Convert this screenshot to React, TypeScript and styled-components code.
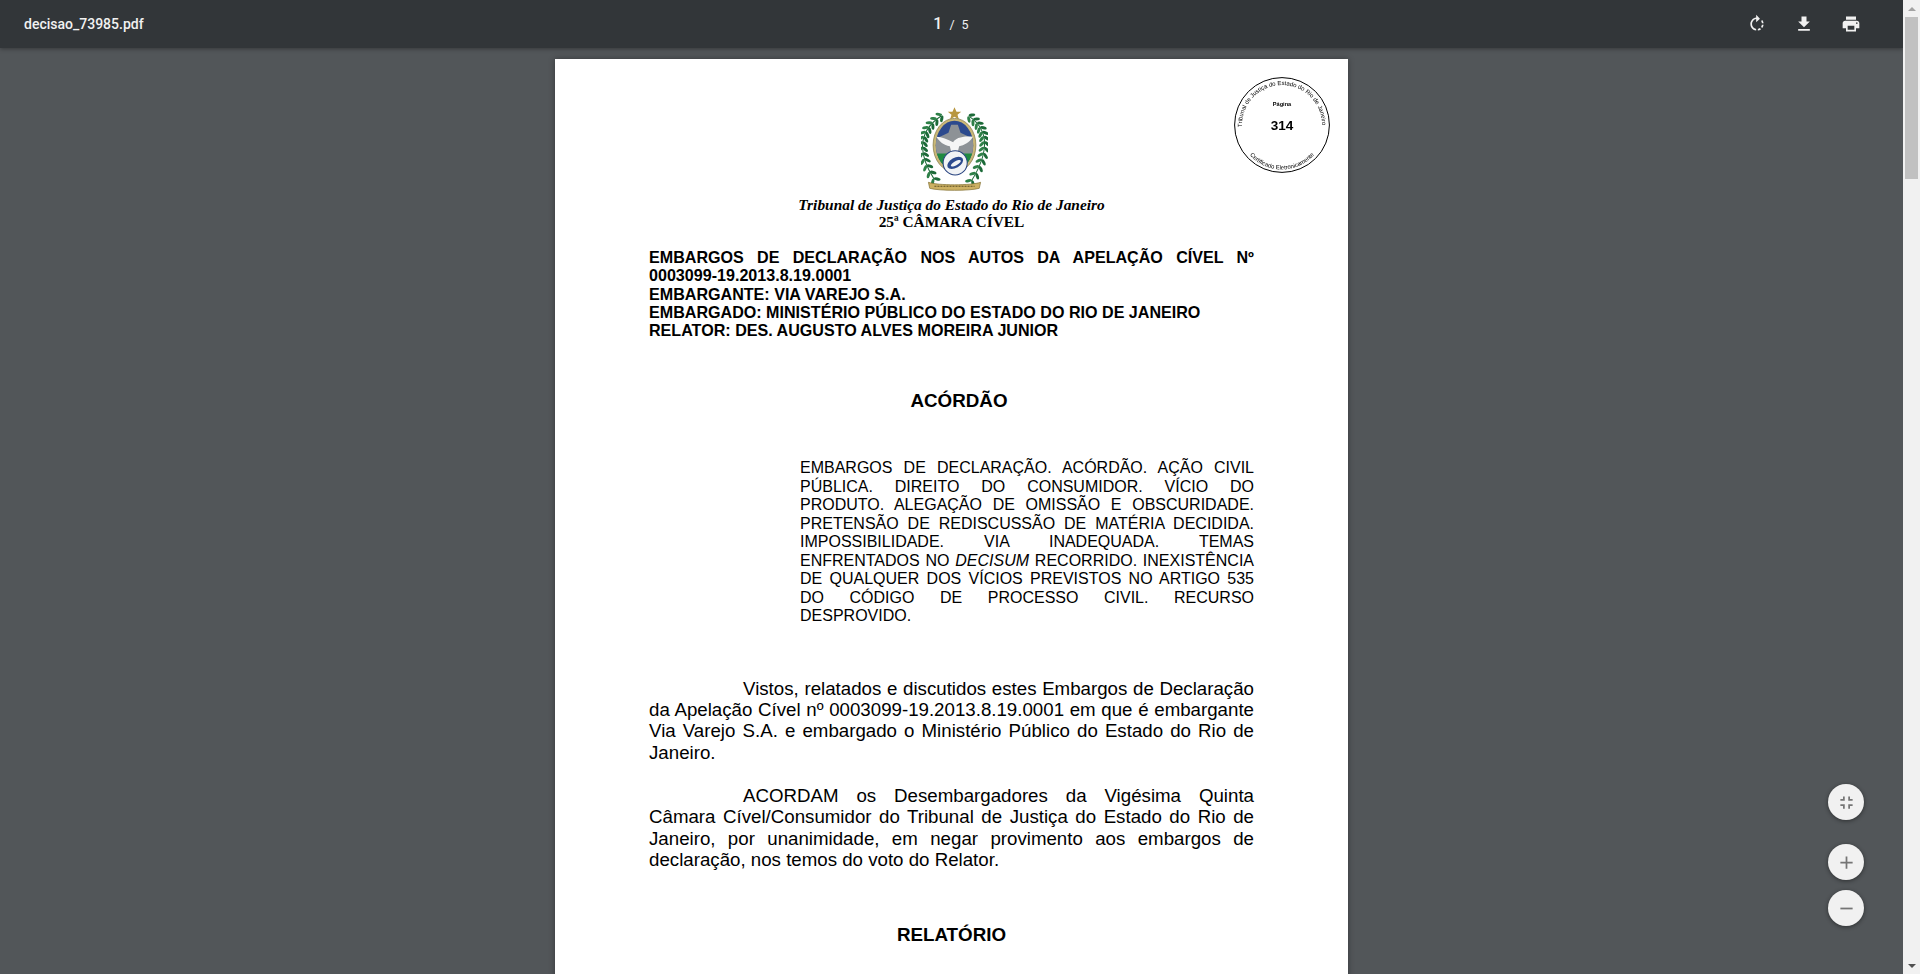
import React from "react";
import styled, { createGlobalStyle } from "styled-components";

const GlobalStyle = createGlobalStyle`
	html, body {
		margin: 0;
		height: 100%;
		overflow: hidden;
		background: #525659;
	}
`;

const Viewer = styled.div`
	width: 1920px;
	height: 974px;
	display: flex;
	overflow: hidden;
	background: #525659;
	font-family: "Liberation Sans", Arial, sans-serif;
`;

const Main = styled.div`
	flex: 1;
	min-width: 0;
	display: flex;
	flex-direction: column;
	position: relative;
`;

const Toolbar = styled.header`
	height: 48px;
	flex: none;
	display: grid;
	grid-template-columns: 1fr auto 1fr;
	align-items: center;
	padding: 0 24px;
	background: #323639;
	color: #f1f1f1;
	box-shadow: 0 1px 4px rgba(0, 0, 0, 0.35);
	z-index: 2;
`;

const FileName = styled.div`
	font-family: Roboto, sans-serif;
	font-size: 14px;
	font-weight: 500;
`;

const PageCount = styled.div`
	font-family: Roboto, sans-serif;
	font-size: 12.5px;
	display: flex;
	align-items: baseline;
	gap: 7px;
	margin: 0 1px 2px 0;
`;

const CurrentPage = styled.span`
	font-size: 16px;
	font-weight: 500;
`;

const Actions = styled.div`
	display: flex;
	justify-content: flex-end;
	gap: 27px;
	margin-right: 18px;
`;

const ToolIcon = styled.svg`
	width: 20px;
	height: 20px;
	fill: #f1f1f1;
	display: block;
`;

const Canvas = styled.div`
	flex: 1;
	display: flex;
	justify-content: center;
	padding-top: 11px;
	overflow: hidden;
`;

const Page = styled.article`
	width: 793px;
	height: 1122px;
	flex: none;
	box-sizing: border-box;
	padding: 0 94px;
	background: #fff;
	color: #000;
	box-shadow: 0 0 6px rgba(0, 0, 0, 0.35);
	position: relative;
`;

const Letterhead = styled.div`
	display: flex;
	flex-direction: column;
	align-items: center;
	padding-top: 47px;
`;

const EmblemArt = styled.svg`
	width: 67px;
	height: 87px;
	margin: 0 0 3px 6px;
	display: block;
	filter: blur(0.45px);
`;

const CourtName = styled.div<{ $italic?: boolean }>`
	font-family: "Liberation Serif", serif;
	font-weight: bold;
	font-style: ${({ $italic }) => ($italic ? "italic" : "normal")};
	font-size: 15.4px;
	line-height: 17px;
`;

const Stamp = styled.svg`
	position: absolute;
	top: 18px;
	right: 18px;
	width: 96px;
	height: 96px;
	font-family: "Liberation Sans", Arial, sans-serif;
	filter: blur(0.25px);
`;

const CaseHead = styled.div`
	margin-top: 18px;
	font-size: 16.1px;
	font-weight: bold;
	line-height: 18.3px;
`;

const CaseTitle = styled.div`
	text-align: justify;
`;

const CaseNumber = styled.span`
	white-space: nowrap;
`;

const Heading = styled.h2<{ $top: number; $indent?: number }>`
	margin: ${({ $top }) => $top}px 0 0;
	padding-left: ${({ $indent }) => $indent ?? 0}px;
	font-size: 18.8px;
	line-height: 22px;
	font-weight: bold;
	text-align: center;
`;

const Summary = styled.div`
	margin: 47px 0 0 151px;
	font-size: 16px;
	line-height: 18.45px;
	text-align: justify;
`;

const Body = styled.div`
	margin-top: 52px;
`;

const Paragraph = styled.p`
	margin: 0 0 21.5px;
	font-size: 18.7px;
	line-height: 21.4px;
	text-align: justify;
	text-indent: 94px;
`;

const FabGroup = styled.div`
	position: absolute;
	right: 39px;
	bottom: 48px;
	display: flex;
	flex-direction: column;
	gap: 10px;
`;

const Fab = styled.button<{ $gap?: boolean }>`
	width: 36px;
	height: 36px;
	padding: 0;
	border: 0;
	border-radius: 50%;
	display: flex;
	align-items: center;
	justify-content: center;
	background: #f1f1f1;
	box-shadow: 0 1px 4px rgba(0, 0, 0, 0.45);
	margin-bottom: ${({ $gap }) => ($gap ? "14px" : "0")};
`;

const FabIcon = styled.svg`
	width: 21px;
	height: 21px;
	fill: #757575;
`;

const Scrollbar = styled.div`
	width: 17px;
	flex: none;
	display: flex;
	flex-direction: column;
	align-items: center;
	background: #f1f1f1;
	z-index: 3;
`;

const ScrollArrow = styled.div<{ $down?: boolean }>`
	height: 17px;
	flex: none;
	display: flex;
	align-items: center;
	justify-content: center;
	&::after {
		content: "";
		border-left: 4px solid transparent;
		border-right: 4px solid transparent;
		${({ $down }) =>
			$down ? "border-top: 4px solid #505050;" : "border-bottom: 4px solid #a3a3a3;"}
	}
`;

const ScrollThumb = styled.div`
	width: 13px;
	height: 162px;
	background: #c1c1c1;
`;

const ScrollTrack = styled.div`
	flex: 1;
`;

// one laurel branch: leaves in pairs along a quadratic curve
function Branch({ from, ctrl, to }: { from: number[]; ctrl: number[]; to: number[] }) {
	const leaves = [];
	for (let i = 0; i < 13; i++) {
		const t = i / 12;
		const x = (1 - t) * (1 - t) * from[0] + 2 * t * (1 - t) * ctrl[0] + t * t * to[0];
		const y = (1 - t) * (1 - t) * from[1] + 2 * t * (1 - t) * ctrl[1] + t * t * to[1];
		const dx = 2 * (1 - t) * (ctrl[0] - from[0]) + 2 * t * (to[0] - ctrl[0]);
		const dy = 2 * (1 - t) * (ctrl[1] - from[1]) + 2 * t * (to[1] - ctrl[1]);
		const angle = (Math.atan2(dy, dx) * 180) / Math.PI;
		leaves.push(
			<g key={i} transform={`translate(${x} ${y}) rotate(${angle})`}>
				<ellipse cx="3" cy="-8" rx="10" ry="4.5" transform="rotate(-45 3 -8)" fill="#1c6a38" />
				<ellipse cx="3" cy="8" rx="10" ry="4.5" transform="rotate(45 3 8)" fill="#2e8048" />
			</g>
		);
	}
	return (
		<g>
			<path d={`M${from[0]} ${from[1]} Q${ctrl[0]} ${ctrl[1]} ${to[0]} ${to[1]}`} fill="none" stroke="#1c6a38" strokeWidth="3" />
			{leaves}
		</g>
	);
}

function Emblem() {
	return (
		<EmblemArt viewBox="50 20 200 260">
			<defs>
				<clipPath id="shieldClip">
					<ellipse cx="150" cy="137" rx="56" ry="73" />
				</clipPath>
			</defs>
			<Branch from={[110, 50]} ctrl={[10, 116]} to={[90, 240]} />
			<Branch from={[195, 52]} ctrl={[282, 112]} to={[200, 245]} />
			<polygon points="150,24 156,37 170,37 159,46 163,60 150,52 137,60 141,46 130,37 144,37" fill="#b8963e" />
			<ellipse cx="150" cy="137" rx="64" ry="80" fill="#c9b777" stroke="#7d7340" strokeWidth="2" />
			<g clipPath="url(#shieldClip)">
				<rect x="90" y="60" width="120" height="160" fill="#2c4a8e" />
				<path d="M94 118 L132 100 L140 76 L160 76 L168 100 L206 118 L206 166 L94 166 Z" fill="#8d9296" />
				<rect x="90" y="162" width="120" height="60" fill="#1f8a40" />
			</g>
			<path d="M96 112 C112 112 130 120 146 128 C152 116 176 108 205 112 C196 128 178 138 164 140 L160 156 L150 158 L140 156 L136 140 C118 138 104 126 96 112 Z" fill="#f5f5f5" />
			<circle cx="152" cy="190" r="36" fill="#f1f3f5" stroke="#27427f" strokeWidth="3" />
			<ellipse cx="152" cy="190" rx="26" ry="15" transform="rotate(-30 152 190)" fill="#2c4a8e" />
			<ellipse cx="154" cy="191" rx="17" ry="6" transform="rotate(-30 154 191)" fill="#f1f3f5" />
			<path d="M72 248 C100 258 200 258 228 248 L224 266 C196 274 104 274 76 266 Z" fill="#cdb163" stroke="#7c6a2c" strokeWidth="2" />
			<path d="M90 260 H210" stroke="#5f5226" strokeWidth="3" strokeDasharray="6 3" />
		</EmblemArt>
	);
}

function CourtStamp() {
	return (
		<Stamp viewBox="0 0 96 96">
			<defs>
				<path id="stampTop" d="M8.05 50 A40 40 0 1 1 87.95 50" />
				<path id="stampBottom" d="M12 73 A43 43 0 0 0 84 73" />
			</defs>
			<circle cx="48" cy="48" r="47.4" fill="#fff" stroke="#000" strokeWidth="1" />
			<text fontSize="6" fill="#000">
				<textPath href="#stampTop">Tribunal de Justiça do Estado do Rio de Janeiro</textPath>
			</text>
			<text fontSize="5.9" fill="#000" textAnchor="middle">
				<textPath href="#stampBottom" startOffset="50%">Certificado Eletronicamente</textPath>
			</text>
			<text x="48" y="29" textAnchor="middle" fontSize="5.6" fontWeight="bold">Página</text>
			<text x="48" y="53" textAnchor="middle" fontSize="13.5" fontWeight="bold">314</text>
		</Stamp>
	);
}

export default function App() {
	return (
		<Viewer>
			<GlobalStyle />
			<Main>
				<Toolbar>
					<FileName>decisao_73985.pdf</FileName>
					<PageCount>
						<CurrentPage>1</CurrentPage>
						<span>/</span>
						<span>5</span>
					</PageCount>
					<Actions>
						<ToolIcon viewBox="0 0 24 24">
							<path d="M15.55 5.55L11 1v3.07C7.06 4.56 4 7.92 4 12s3.05 7.44 7 7.93v-2.02c-2.84-.48-5-2.94-5-5.91s2.16-5.43 5-5.91V10l4.55-4.45zM19.93 11c-.17-1.39-.72-2.73-1.62-3.89l-1.42 1.42c.54.75.88 1.6 1.02 2.47h2.02zM13 17.9v2.02c1.39-.17 2.74-.71 3.9-1.61l-1.44-1.44c-.75.54-1.59.89-2.46 1.03zm3.89-2.42l1.42 1.41c.9-1.16 1.45-2.5 1.62-3.89h-2.02c-.14.87-.48 1.72-1.02 2.48z" />
						</ToolIcon>
						<ToolIcon viewBox="0 0 24 24">
							<path d="M19 9h-4V3H9v6H5l7 7 7-7zM5 18v2h14v-2H5z" />
						</ToolIcon>
						<ToolIcon viewBox="0 0 24 24">
							<path d="M19 8H5c-1.66 0-3 1.34-3 3v6h4v4h12v-4h4v-6c0-1.66-1.34-3-3-3zm-3 11H8v-5h8v5zm3-7c-.55 0-1-.45-1-1s.45-1 1-1 1 .45 1 1-.45 1-1 1zm-1-9H6v4h12V3z" />
						</ToolIcon>
					</Actions>
				</Toolbar>
				<Canvas>
					<Page>
						<CourtStamp />
						<Letterhead>
							<Emblem />
							<CourtName $italic>Tribunal de Justiça do Estado do Rio de Janeiro</CourtName>
							<CourtName>25ª CÂMARA CÍVEL</CourtName>
						</Letterhead>
						<CaseHead>
							<CaseTitle>
								EMBARGOS DE DECLARAÇÃO NOS AUTOS DA APELAÇÃO CÍVEL Nº <CaseNumber>0003099-19.2013.8.19.0001</CaseNumber>
							</CaseTitle>
							<div>EMBARGANTE: VIA VAREJO S.A.</div>
							<div>EMBARGADO: MINISTÉRIO PÚBLICO DO ESTADO DO RIO DE JANEIRO</div>
							<div>RELATOR: DES. AUGUSTO ALVES MOREIRA JUNIOR</div>
						</CaseHead>
						<Heading $top={51} $indent={15}>ACÓRDÃO</Heading>
						<Summary>
							EMBARGOS DE DECLARAÇÃO. ACÓRDÃO. AÇÃO CIVIL PÚBLICA. DIREITO DO CONSUMIDOR. VÍCIO DO PRODUTO. ALEGAÇÃO DE OMISSÃO E OBSCURIDADE. PRETENSÃO DE REDISCUSSÃO DE MATÉRIA DECIDIDA. IMPOSSIBILIDADE. VIA INADEQUADA. TEMAS ENFRENTADOS NO <i>DECISUM</i> RECORRIDO. INEXISTÊNCIA DE QUALQUER DOS VÍCIOS PREVISTOS NO ARTIGO 535 DO CÓDIGO DE PROCESSO CIVIL. RECURSO DESPROVIDO.
						</Summary>
						<Body>
							<Paragraph>Vistos, relatados e discutidos estes Embargos de Declaração da Apelação Cível nº 0003099-19.2013.8.19.0001 em que é embargante Via Varejo S.A. e embargado o Ministério Público do Estado do Rio de Janeiro.</Paragraph>
							<Paragraph>ACORDAM os Desembargadores da Vigésima Quinta Câmara Cível/Consumidor do Tribunal de Justiça do Estado do Rio de Janeiro, por unanimidade, em negar provimento aos embargos de declaração, nos temos do voto do Relator.</Paragraph>
						</Body>
						<Heading $top={54}>RELATÓRIO</Heading>
					</Page>
				</Canvas>
				<FabGroup>
					<Fab $gap>
						<FabIcon viewBox="0 0 24 24">
							<path d="M5 16h3v3h2v-5H5v2zm3-8H5v2h5V5H8v3zm6 11h2v-3h3v-2h-5v5zm2-11V5h-2v5h5V8h-3z" />
						</FabIcon>
					</Fab>
					<Fab>
						<FabIcon viewBox="0 0 24 24">
							<path d="M19 13h-6v6h-2v-6H5v-2h6V5h2v6h6v2z" />
						</FabIcon>
					</Fab>
					<Fab>
						<FabIcon viewBox="0 0 24 24">
							<path d="M19 13H5v-2h14v2z" />
						</FabIcon>
					</Fab>
				</FabGroup>
			</Main>
			<Scrollbar>
				<ScrollArrow />
				<ScrollThumb />
				<ScrollTrack />
				<ScrollArrow $down />
			</Scrollbar>
		</Viewer>
	);
}
